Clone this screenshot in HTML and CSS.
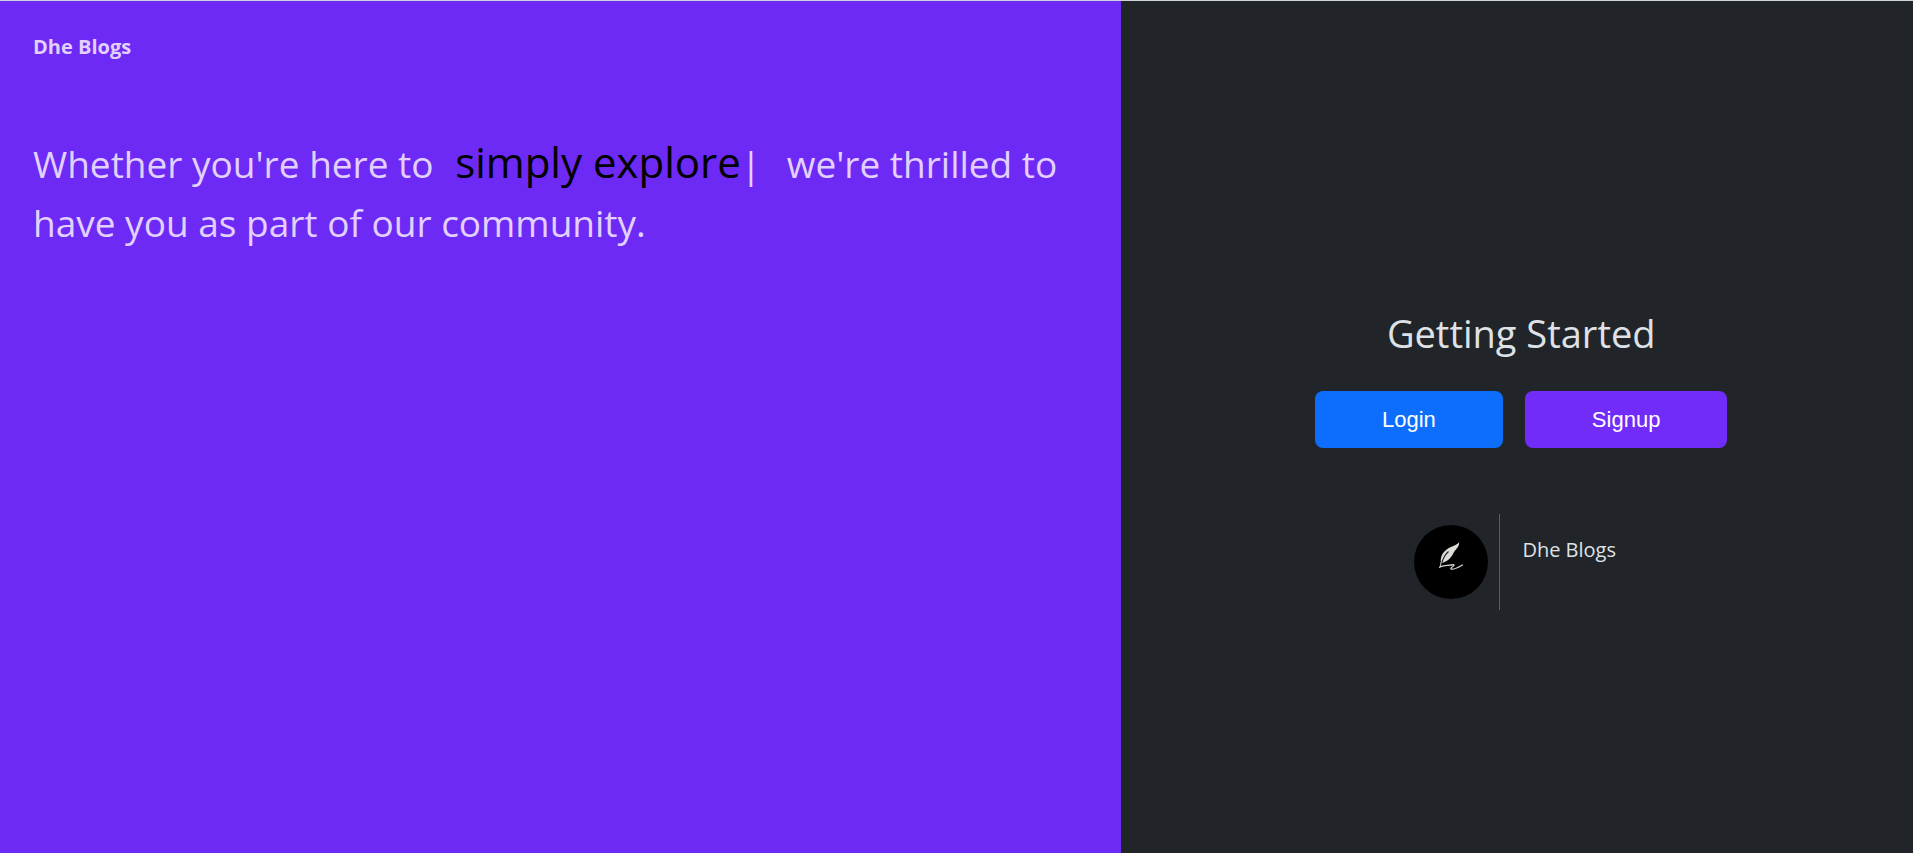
FILE: index.html
```html
<!DOCTYPE html>
<html lang="en">
<head>
  <meta charset="utf-8">
  <meta name="viewport" content="width=device-width, initial-scale=1">
  <title>Dhe Blogs</title>
  <link rel="stylesheet" href="styles.css">
</head>
<body>
  <div class="page">
    <section class="intro">
      <p class="brand">Dhe Blogs</p>
      <h1 class="headline">Whether you're here to <span class="typed"><span class="word">simply explore</span>|</span> we're thrilled to have you as part of our community.</h1>
    </section>
    <main class="start">
      <h2 class="title">Getting Started</h2>
      <div class="actions">
        <button type="button" class="btn btn-login">Login</button>
        <button type="button" class="btn btn-signup">Signup</button>
      </div>
      <div class="about">
        <div class="logo-box">
          <svg class="logo" viewBox="0 0 74 74" role="img" aria-label="Quill logo">
            <circle cx="37" cy="37" r="37" fill="#000"/>
            <path d="M45 17C44 20 39 20.500 34 23.500C28.500 27 26 32 27 38C32 37.500 37 33.500 39.500 28C41 24.500 46 21.500 45 17Z" fill="#deded9"/>
            <path d="M34.500 26.500C31 29.500 28.500 34 27 41" fill="none" stroke="#222" stroke-width="1.100"/>
            <path d="M27 37L26.200 42" fill="none" stroke="#bdbdb9" stroke-width="1"/>
            <path d="M25.500 42.300C29 40 34 40.800 39.500 39.700C42 40 35.500 43 37 43.900C39.500 45.200 44 42.500 48.500 40" fill="none" stroke="#d2d2cd" stroke-width="1.200" stroke-linecap="round"/>
          </svg>
        </div>
        <p class="about-name">Dhe Blogs</p>
      </div>
    </main>
  </div>
</body>
</html>
```
FILE: styles.css
```css
* {
  box-sizing: border-box;
}

body {
  margin: 0;
  background: #212529;
  font-family: "Trebuchet MS", "Open Sans", sans-serif;
}

.page {
  display: grid;
  grid-template-columns: 17fr 12fr;
  min-height: 100vh;
  border-top: 1px solid #ced4da;
}

.intro {
  padding: 28px 33px;
  background: #6d2af4;
  color: #e2d0ff;
}

.brand {
  margin: 0;
  font-size: 20px;
  font-weight: 700;
  line-height: 36px;
}

.headline {
  margin: 69px 0 0;
  font-size: 37px;
  font-weight: 400;
  line-height: 59px;
}

.typed {
  margin: 0 16px 0 12px;
}

.word {
  color: #000;
  font-size: 42px;
  line-height: 42px;
}

.start {
  display: flex;
  flex-direction: column;
  align-items: center;
  justify-content: center;
  padding: 58px 0 0 8px;
  color: #dee2e6;
}

.title {
  margin: 0;
  font-size: 38px;
  font-weight: 400;
  line-height: 60px;
}

.actions {
  display: flex;
  gap: 22px;
  margin-top: 28px;
}

.btn {
  padding: 12px 67px;
  border: 0;
  border-radius: 8px;
  color: #fff;
  font-family: Arial, "Liberation Sans", sans-serif;
  font-size: 22px;
  line-height: 33px;
}

.btn-login {
  background: #0d6efd;
}

.btn-signup {
  background: #712cf9;
}

.about {
  display: flex;
  margin-top: 66px;
}

.logo-box {
  padding: 11px;
  border-right: 1px solid #5a5e62;
}

.logo {
  display: block;
  width: 74px;
  height: 74px;
}

.about-name {
  margin: 18px 0 0;
  padding: 0 23px 0 22px;
  font-size: 20px;
  line-height: 36px;
}
```
